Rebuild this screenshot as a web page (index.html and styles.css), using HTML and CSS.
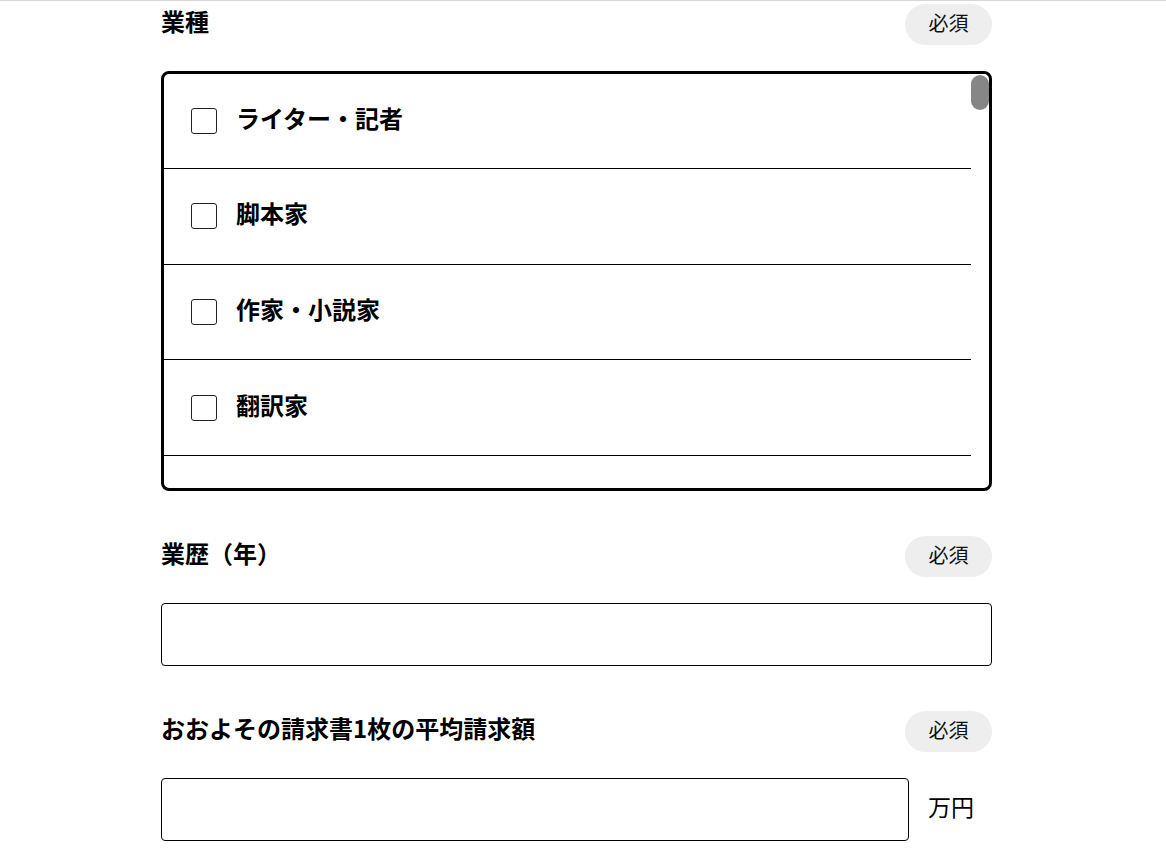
FILE: index.html
```html
<!DOCTYPE html>
<html lang="ja">
<head>
<meta charset="utf-8">
<link rel="stylesheet" href="styles.css">
</head>
<body>
<div class="topline"></div>
<main class="form">
  <section class="field">
    <div class="field-head">
      <h2 class="label">業種</h2>
      <span class="badge">必須</span>
    </div>
    <div class="checklist">
      <ul class="items">
        <li class="item"><span class="box"></span><span class="item-text">ライター・記者</span></li>
        <li class="item"><span class="box"></span><span class="item-text">脚本家</span></li>
        <li class="item"><span class="box"></span><span class="item-text">作家・小説家</span></li>
        <li class="item"><span class="box"></span><span class="item-text">翻訳家</span></li>
        <li class="item"></li>
      </ul>
      <div class="track"><div class="thumb"></div></div>
    </div>
  </section>

  <section class="field">
    <div class="field-head">
      <h2 class="label">業歴（年）</h2>
      <span class="badge">必須</span>
    </div>
    <input class="text-input" type="text">
  </section>

  <section class="field">
    <div class="field-head">
      <h2 class="label">おおよその請求書1枚の平均請求額</h2>
      <span class="badge">必須</span>
    </div>
    <div class="unit-row">
      <input class="text-input short" type="text">
      <span class="unit">万円</span>
    </div>
  </section>
</main>
</body>
</html>
```
FILE: styles.css
```css
html, body {
  margin: 0;
  padding: 0;
  background: #fff;
  color: #000;
  font-family: "Noto Sans CJK JP", "Noto Sans", sans-serif;
}
.topline {
  height: 1px;
  background: #d6d6d6;
}
.form {
  width: 831px;
  margin: 0 0 0 161px;
  padding-top: 3px;
}
.field + .field {
  margin-top: 45px;
}
.field-head {
  display: flex;
  align-items: center;
  justify-content: space-between;
  height: 41px;
  margin-bottom: 26px;
}
.label {
  margin: 0;
  padding-bottom: 8px;
  font-size: 24px;
  font-weight: 700;
  line-height: 1;
}
.badge {
  display: flex;
  align-items: center;
  justify-content: center;
  box-sizing: border-box;
  width: 87px;
  height: 41px;
  padding-bottom: 4px;
  border-radius: 21px;
  background: #eeeeee;
  font-size: 20px;
  line-height: 1;
  color: #111;
}
.checklist {
  display: flex;
  height: 414px;
  border: 3px solid #000;
  border-radius: 8px;
  overflow: hidden;
}
.items {
  flex: 1;
  list-style: none;
  margin: 0;
  padding: 0;
  overflow: hidden;
}
.item {
  display: flex;
  align-items: center;
  box-sizing: border-box;
  height: 95.67px;
  padding-left: 27px;
  border-bottom: 1px solid #000;
}
.item:first-child {
  height: 95px;
}
.box {
  width: 26px;
  height: 26px;
  box-sizing: border-box;
  border: 1px solid #222;
  border-radius: 3px;
  margin-right: 19px;
  flex: none;
}
.item-text {
  padding-bottom: 6px;
  font-size: 24px;
  font-weight: 700;
  line-height: 1;
}
.track {
  width: 18px;
  flex: none;
  padding-top: 1px;
}
.thumb {
  height: 35px;
  border-radius: 9px;
  background: #868686;
}
.text-input {
  display: block;
  box-sizing: border-box;
  width: 100%;
  height: 63px;
  margin: 0;
  border: 1px solid #000;
  border-radius: 4px;
  background: #fff;
  font-size: 20px;
  outline: none;
}
.unit-row {
  display: flex;
  align-items: center;
}
.text-input.short {
  width: 748px;
}
.unit {
  margin-left: 19px;
  padding-bottom: 6px;
  font-size: 23px;
  line-height: 1;
}
```
